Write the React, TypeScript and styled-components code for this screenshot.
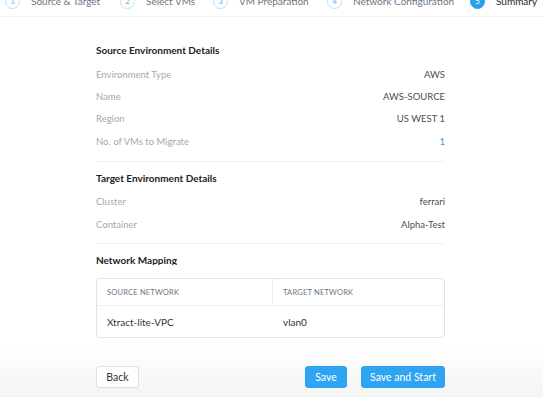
import React from "react";
import styled, { createGlobalStyle } from "styled-components";

const Global = createGlobalStyle`
  html, body { margin: 0; padding: 0; background: #fff; }
  body { font-family: Lato, "Noto Sans", Arial, sans-serif; overflow: hidden; }
  * { box-sizing: border-box; }
`;

const Page = styled.div`
  width: 543px;
  height: 397px;
  display: flex;
  flex-direction: column;
  overflow: hidden;
`;

const Stepper = styled.div`
  height: 34px;
  margin-top: -17px;
  padding-top: 3px;
  flex: none;
  display: flex;
  align-items: center;
  padding-left: 5px;
  border-bottom: 1px solid #eef0f2;
`;

const Step = styled.div<{ $w: number }>`
  display: flex;
  align-items: center;
  gap: 11px;
  white-space: nowrap;
  width: ${(p) => p.$w}px;
  flex: none;
`;

const Circle = styled.div<{ $active?: boolean }>`
  width: 15px;
  height: 15px;
  flex: none;
  border-radius: 50%;
  border: 1px solid ${(p) => (p.$active ? "#2d9fe8" : "#bfe0f7")};
  background: ${(p) => (p.$active ? "#2d9fe8" : "#fff")};
  color: ${(p) => (p.$active ? "#fff" : "#5db4ee")};
  font-size: 8px;
  display: flex;
  align-items: center;
  justify-content: center;
`;

const StepLabel = styled.span<{ $active?: boolean }>`
  font-size: 10px;
  color: ${(p) => (p.$active ? "#222" : "#6b7684")};
`;

const Content = styled.div`
  flex: 1;
  width: 349px;
  margin-left: 96px;
  padding-top: 25px;
`;

const Heading = styled.div<{ $clip?: boolean }>`
  font-size: 10px;
  font-weight: 700;
  color: #222;
  line-height: 16px;
  height: ${(p) => (p.$clip ? "13px" : "16px")};
  overflow: hidden;
  margin-bottom: ${(p) => (p.$clip ? "13px" : "5px")};
`;

const Row = styled.div`
  height: 22.4px;
  display: flex;
  align-items: center;
  justify-content: space-between;
  font-size: 9.5px;
`;

const Label = styled.span`
  color: #a3a9b1;
`;

const Value = styled.span<{ $link?: boolean }>`
  color: ${(p) => (p.$link ? "#2d9fe8" : "#4a4f57")};
`;

const Divider = styled.div`
  height: 1px;
  background: #eef0f2;
  margin: 8px 0 8px;
`;

const Table = styled.div`
  border: 1px solid #dfe2e6;
  border-radius: 3px;
  display: grid;
  grid-template-columns: 176px 1fr;
`;

const HeadCell = styled.div<{ $last?: boolean }>`
  height: 27px;
  display: flex;
  align-items: center;
  padding-left: 10px;
  font-size: 7.5px;
  letter-spacing: 0.2px;
  color: #6b7684;
  border-bottom: 1px solid #eef0f2;
  border-right: ${(p) => (p.$last ? "none" : "1px solid #eef0f2")};
`;

const Cell = styled.div`
  height: 31px;
  display: flex;
  align-items: center;
  padding-left: 10px;
  font-size: 10px;
  color: #2f343b;
`;

const Footer = styled.div`
  flex: none;
  height: 52px;
  padding: 21px 98px 0 96px;
  display: flex;
  align-items: flex-start;
  background: linear-gradient(to bottom, #ffffff 0%, #f4f4f4 100%);
`;

const Button = styled.button<{ $primary?: boolean; $w: number }>`
  height: 22px;
  width: ${(p) => p.$w}px;
  border-radius: 3px;
  font-family: inherit;
  font-size: 10.5px;
  padding: 0;
  cursor: pointer;
  border: 1px solid ${(p) => (p.$primary ? "#28a1ee" : "#dcdfe3")};
  background: ${(p) => (p.$primary ? "#2ea5f2" : "#fff")};
  color: ${(p) => (p.$primary ? "#fff" : "#333")};
`;

const Spacer = styled.div`
  flex: 1;
`;

const Gap = styled.div`
  width: 14px;
`;

const steps: [string, number][] = [
  ["Source & Target", 115],
  ["Select VMs", 93],
  ["VM Preparation", 114],
  ["Network Configuration", 143],
  ["Summary", 70],
];

export default function App() {
  return (
    <Page>
      <Global />
      <Stepper>
        {steps.map(([s, w], i) => (
          <Step key={s} $w={w}>
            <Circle $active={i === 4}>{i + 1}</Circle>
            <StepLabel $active={i === 4}>{s}</StepLabel>
          </Step>
        ))}
      </Stepper>
      <Content>
        <Heading>Source Environment Details</Heading>
        <Row><Label>Environment Type</Label><Value>AWS</Value></Row>
        <Row><Label>Name</Label><Value>AWS-SOURCE</Value></Row>
        <Row><Label>Region</Label><Value>US WEST 1</Value></Row>
        <Row><Label>No. of VMs to Migrate</Label><Value $link>1</Value></Row>
        <Divider />
        <Heading>Target Environment Details</Heading>
        <Row><Label>Cluster</Label><Value>ferrari</Value></Row>
        <Row><Label>Container</Label><Value>Alpha-Test</Value></Row>
        <Divider />
        <Heading $clip>Network Mapping</Heading>
        <Table>
          <HeadCell>SOURCE NETWORK</HeadCell>
          <HeadCell $last>TARGET NETWORK</HeadCell>
          <Cell>Xtract-lite-VPC</Cell>
          <Cell>vlan0</Cell>
        </Table>
      </Content>
      <Footer>
        <Button $w={43}>Back</Button>
        <Spacer />
        <Button $primary $w={42}>Save</Button>
        <Gap />
        <Button $primary $w={84}>Save and Start</Button>
      </Footer>
    </Page>
  );
}
